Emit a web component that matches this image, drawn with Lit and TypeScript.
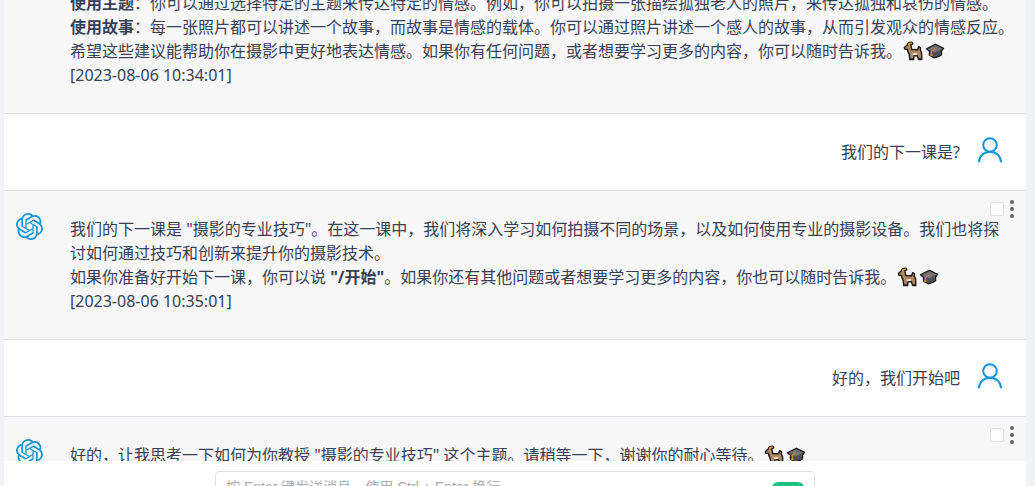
import { LitElement, html, css, svg } from "lit";
import { customElement, property, query } from "lit/decorators.js";

const goat = html`<svg class="emoji" viewBox="0 0 20 20" role="img" aria-label="goat">
  <path
    d="M1.4 6.6 4.4 3.8C4.8 1.8 6.4 1 9 1.2L9.8 2.8 7.8 3.6 8.8 8.6 14.6 8.8 15.6 5.6 17.4 6.6 17.4 9 18.6 12 18.8 18.6H15.6L14.4 14.6 11 14.8 10.6 18.6H6.8L6.2 13.4 4.8 10.4 4.6 8.4 1.8 8.2Z"
    fill="#b08763" stroke="#1b1714" stroke-width="1.4" stroke-linejoin="round"
  />
  <path d="M4.8 3.8C5.2 1.8 7 1.2 9.2 1.6L8.8 2.8 7 3.2 6.4 4.8Z" fill="#e09c12" />
  <path d="M9.4 12.4 14.2 12 13.6 14 10.2 14.2Z" fill="#f5ebe0" />
  <path d="M7.2 17H10.2V18.6H7.2ZM15.8 17H18.4V18.6H15.8Z" fill="#35302d" />
</svg>`;

const cap = html`<svg class="emoji" viewBox="0 0 20 20" role="img" aria-label="graduation cap">
  <path
    d="M1.4 7.8 10.4 3.2 18.6 7.4 16.6 9.8V13.8C14.4 15.6 12 16.6 9 16.8L4.4 14.2V10.4Z"
    fill="#4e4f51" stroke="#141414" stroke-width="1.2" stroke-linejoin="round"
  />
  <path d="M2.8 8 10.4 4.2 17.4 7.6 10.2 11.4Z" fill="#717275" />
  <path d="M10.2 7.8 6.4 10.2V14.4" fill="none" stroke="#d9930f" stroke-width="1.1" />
  <path d="M5.4 13.2H7.4V15.2H5.4Z" fill="#d9930f" />
</svg>`;

const knot = svg`<path fill="currentColor" d="M22.2819 9.8211a5.9847 5.9847 0 0 0-.5157-4.9108 6.0462 6.0462 0 0 0-6.5098-2.9A6.0651 6.0651 0 0 0 4.9807 4.1818a5.9847 5.9847 0 0 0-3.9977 2.9 6.0462 6.0462 0 0 0 .7427 7.0966 5.98 5.98 0 0 0 .511 4.9107 6.051 6.051 0 0 0 6.5146 2.9001A5.9847 5.9847 0 0 0 13.2599 24a6.0557 6.0557 0 0 0 5.7718-4.2058 5.9894 5.9894 0 0 0 3.9977-2.9001 6.0557 6.0557 0 0 0-.7475-7.0729zm-9.022 12.6081a4.4755 4.4755 0 0 1-2.8764-1.0408l.1419-.0804 4.7783-2.7582a.7948.7948 0 0 0 .3927-.6813v-6.7369l2.02 1.1686a.071.071 0 0 1 .038.052v5.5826a4.504 4.504 0 0 1-4.4945 4.4944zm-9.6607-4.1254a4.4708 4.4708 0 0 1-.5346-3.0137l.142.0852 4.783 2.7582a.7712.7712 0 0 0 .7806 0l5.8428-3.3685v2.3324a.0804.0804 0 0 1-.0332.0615L9.74 19.9502a4.4992 4.4992 0 0 1-6.1408-1.6464zM2.3408 7.8956a4.485 4.485 0 0 1 2.3655-1.9728V11.6a.7664.7664 0 0 0 .3879.6765l5.8144 3.3543-2.0201 1.1685a.0757.0757 0 0 1-.071 0l-4.8303-2.7865A4.504 4.504 0 0 1 2.3408 7.872zm16.5963 3.8558L13.1038 8.364 15.1192 7.2a.0757.0757 0 0 1 .071 0l4.8303 2.7913a4.4944 4.4944 0 0 1-.6765 8.1042v-5.6772a.79.79 0 0 0-.407-.667zm2.0107-3.0231l-.142-.0852-4.7735-2.7818a.7759.7759 0 0 0-.7854 0L9.409 9.2297V6.8974a.0662.0662 0 0 1 .0284-.0615l4.8303-2.7866a4.4992 4.4992 0 0 1 6.6802 4.66zM8.3065 12.863l-2.02-1.1638a.0804.0804 0 0 1-.038-.0567V6.0742a4.4992 4.4992 0 0 1 7.3757-3.4537l-.142.0805L8.704 5.459a.7948.7948 0 0 0-.3927.6813zm1.0976-2.3654l2.602-1.4998 2.6069 1.4998v2.9994l-2.5974 1.4997-2.6067-1.4997Z"/>`;

@customElement("chat-message")
export class ChatMessage extends LitElement {
  @property() from: "bot" | "user" = "bot";

  static styles = css`
    :host {
      display: block;
      border-bottom: 1px solid #dcdfe6;
    }
    .row {
      display: flex;
      line-height: 24px;
    }
    .bot {
      background: #f7f7f7;
      padding: 0 11px 26px 12px;
    }
    .user {
      background: #fff;
      justify-content: flex-end;
      gap: 18px;
      padding: 22px 24px 26px 12px;
    }
    .avatar {
      flex: none;
      color: #1296db;
    }
    .avatar svg {
      display: block;
    }
    .bot .avatar {
      width: 54px;
      padding-top: 22px;
    }
    .body {
      flex: 1;
      min-width: 0;
    }
    .user .said {
      padding-top: 4px;
    }
    .tools {
      display: flex;
      align-items: center;
      justify-content: flex-end;
      gap: 6px;
      height: 16px;
      padding: 10px 1px 0 0;
    }
    .pick {
      appearance: none;
      box-sizing: border-box;
      width: 14px;
      height: 14px;
      margin: 0;
      border: 1px solid #dcdfe6;
      border-radius: 2px;
      background: #fff;
    }
    .pick:checked {
      background: #1296db;
    }
    .more {
      display: block;
      width: 4px;
      height: 18px;
      padding: 0;
      border: 0;
      background: none;
      color: #606266;
    }
    .more svg {
      display: block;
    }
  `;

  render() {
    if (this.from === "user") {
      return html`<div class="row user">
        <div class="said"><slot></slot></div>
        <div class="avatar">
          <svg width="24" height="28" viewBox="0 0 24 28" fill="none" stroke="currentColor" stroke-width="2" aria-hidden="true">
            <circle cx="12" cy="9" r="6.8" />
            <path d="M1 26.2C1.2 19.8 6 15.8 12 15.8S22.8 19.8 23 26.2" />
          </svg>
        </div>
      </div>`;
    }
    return html`<div class="row bot">
      <div class="avatar">
        <svg width="27" height="27" viewBox="0 0 24 24" aria-hidden="true">${knot}</svg>
      </div>
      <div class="body">
        <div class="tools">
          <input class="pick" type="checkbox" aria-label="选择" />
          <button class="more" type="button" aria-label="更多">
            <svg width="4" height="18" viewBox="0 0 4 18" fill="currentColor">
              <circle cx="2" cy="2" r="2" />
              <circle cx="2" cy="9" r="2" />
              <circle cx="2" cy="16" r="2" />
            </svg>
          </button>
        </div>
        <slot></slot>
      </div>
    </div>`;
  }
}

@customElement("app-root")
export class AppRoot extends LitElement {
  @query(".messages") private messages!: HTMLElement;

  static styles = css`
    :host {
      display: flex;
      flex-direction: column;
      box-sizing: border-box;
      height: 100vh;
      overflow: hidden;
      padding: 0 9px 0 4px;
      background: #f0f2f6;
      color: #374057;
      font-family: "Noto Sans", "Noto Sans CJK SC", sans-serif;
      font-size: 16px;
    }
    .messages {
      flex: 1;
      min-height: 0;
      overflow-y: auto;
      scrollbar-width: none;
    }
    p {
      margin: 0;
    }
    .emoji {
      width: 20px;
      height: 20px;
      margin: 0 1px;
      vertical-align: -4px;
    }
    .composer {
      flex: none;
      box-sizing: border-box;
      height: 25px;
      overflow: hidden;
      padding: 10px 12px 0;
      background: #fff;
    }
    .field {
      display: flex;
      align-items: flex-start;
      box-sizing: border-box;
      max-width: 600px;
      margin: 0 auto;
      padding: 0 10px;
      border: 1px solid #dcdfe6;
      border-radius: 4px;
    }
    .entry {
      flex: 1;
      min-width: 0;
      height: 52px;
      padding: 5px 0;
      border: 0;
      outline: 0;
      resize: none;
      background: none;
      color: inherit;
      font: 14px/20px "Liberation Sans", "Noto Sans CJK SC", sans-serif;
    }
    .entry::placeholder {
      color: #a8abb2;
    }
    .send {
      width: 32px;
      height: 32px;
      margin-top: 10px;
      padding: 0;
      border: 0;
      border-radius: 6px;
      background: #19c37d;
    }
  `;

  firstUpdated() {
    requestAnimationFrame(() => {
      this.messages.scrollTop = 83;
    });
  }

  render() {
    return html`
      <div class="messages">
        <chat-message>
          <p><strong>使用光线</strong>：柔和的光线可以表达温暖，强烈的光线可以表达力量。</p>
          <p><strong>使用色彩</strong>：暖色可以传达快乐，冷色可以传达宁静。</p>
          <p><strong>使用主题</strong>：你可以通过选择特定的主题来传达特定的情感。例如，你可以拍摄一张描绘孤独老人的照片，来传达孤独和哀伤的情感。</p>
          <p><strong>使用故事</strong>：每一张照片都可以讲述一个故事，而故事是情感的载体。你可以通过照片讲述一个感人的故事，从而引发观众的情感反应。</p>
          <p>希望这些建议能帮助你在摄影中更好地表达情感。如果你有任何问题，或者想要学习更多的内容，你可以随时告诉我。${goat}${cap}</p>
          <p>[2023-08-06 10:34:01]</p>
        </chat-message>
        <chat-message from="user">我们的下一课是?</chat-message>
        <chat-message>
          <p>我们的下一课是 "摄影的专业技巧"。在这一课中，我们将深入学习如何拍摄不同的场景，以及如何使用专业的摄影设备。我们也将探讨如何通过技巧和创新来提升你的摄影技术。</p>
          <p>如果你准备好开始下一课，你可以说 <strong>"/开始"</strong>。如果你还有其他问题或者想要学习更多的内容，你也可以随时告诉我。${goat}${cap}</p>
          <p>[2023-08-06 10:35:01]</p>
        </chat-message>
        <chat-message from="user">好的，我们开始吧</chat-message>
        <chat-message>
          <p>好的，让我思考一下如何为你教授 "摄影的专业技巧" 这个主题。请稍等一下，谢谢你的耐心等待。${goat}${cap}</p>
          <p>[2023-08-06 10:36:01]</p>
        </chat-message>
      </div>
      <form class="composer" @submit=${(e: Event) => e.preventDefault()}>
        <div class="field">
          <textarea class="entry" aria-label="消息" placeholder="按 Enter 键发送消息，使用 Ctrl + Enter 换行"></textarea>
          <button class="send" type="submit" aria-label="发送"></button>
        </div>
      </form>
    `;
  }
}
